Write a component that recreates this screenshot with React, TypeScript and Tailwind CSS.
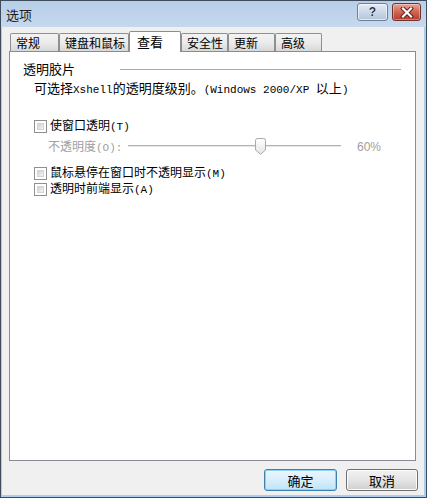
import React from "react";

const CJK = { fontFamily: '"Noto Sans CJK SC", "Noto Sans", sans-serif' };
const MONO = { fontFamily: '"Liberation Mono", "Noto Sans CJK SC", monospace' };

function Mixed({ text }: { text: string }) {
  const parts = text.split(/([\x20-\x7e]+)/).filter((p) => p.length > 0);
  return (
    <>
      {parts.map((p, i) =>
        /^[\x20-\x7e]+$/.test(p) ? (
          <span key={i} style={MONO} className="text-[11px] whitespace-pre">
            {p}
          </span>
        ) : (
          <span key={i}>{p}</span>
        )
      )}
    </>
  );
}

function CheckBox() {
  return (
    <div className="w-[13px] h-[13px] border border-[#8e8f8f] bg-white p-[2px] shrink-0">
      <div className="w-full h-full bg-gradient-to-br from-[#cdd1d6] to-[#f4f4f4] border border-[#d2d4d8]" />
    </div>
  );
}

function Tab({ label, w, selected }: { label: string; w: number; selected?: boolean }) {
  if (selected) {
    return (
      <div
        style={{ width: w }}
        className="h-[21px] -mb-px relative z-10 bg-white border-t border-l border-r border-[#898c95] rounded-t-[2px] pl-[7px] text-[13px] leading-[16px] pt-[2px] text-black whitespace-nowrap"
      >
        {label}
      </div>
    );
  }
  return (
    <div
      style={{ width: w }}
      className="h-[18px] bg-gradient-to-b from-[#f3f3f3] via-[#ebebeb] to-[#d8d8d8] border-t border-l border-r border-[#8e8f8f] rounded-t-[2px] pl-[5px] text-[12px] leading-[16px] pt-[1px] text-black whitespace-nowrap overflow-hidden"
    >
      {label}
    </div>
  );
}

function Row({ text, className }: { text: string; className?: string }) {
  return (
    <div className={"ml-[11px] flex items-center h-[16px] gap-[3px] " + (className ?? "")}>
      <CheckBox />
      <div className="text-[12px] leading-[14px] whitespace-nowrap">
        <Mixed text={text} />
      </div>
    </div>
  );
}

export default function App() {
  return (
    <div
      style={CJK}
      className="w-[427px] h-[498px] flex flex-col bg-[#f0f0f0] border border-[#3e4c5c] text-black overflow-hidden"
    >
      {/* title bar */}
      <div className="h-[26px] flex items-start bg-gradient-to-b from-[#b7cfe9] to-[#c6d8ed] shrink-0">
        <div className="pl-[5px] pt-[6px] text-[13px] leading-[16px] text-[#1e1e1e]">选项</div>
        <div className="ml-auto flex gap-[4px] pt-[2px] pr-[5px]">
          <div className="w-[31px] h-[18px] rounded-[3px] border border-[#6c7f97] bg-gradient-to-b from-[#e3ebf5] via-[#cbd8e8] to-[#b2c4dc] flex items-center justify-center shadow-[inset_0_0_0_1px_rgba(255,255,255,0.6)]">
            <span
              className="text-[12px] font-bold leading-none text-[#28323f]"
              style={{ fontFamily: '"Liberation Sans", sans-serif', textShadow: "0 0 1px #fff, 0 0 1px #fff" }}
            >
              ?
            </span>
          </div>
          <div className="w-[29px] h-[18px] rounded-[3px] border border-[#6e332c] bg-gradient-to-b from-[#e7a596] via-[#cf6555] to-[#b9382b] flex items-center justify-center shadow-[inset_0_0_0_1px_rgba(255,255,255,0.35)]">
            <svg width="14" height="11" viewBox="0 0 14 11">
              <path d="M3 1.5 L11 9.5 M11 1.5 L3 9.5" stroke="#5a1a14" strokeWidth="4" strokeLinecap="square" />
              <path d="M3 1.5 L11 9.5 M11 1.5 L3 9.5" stroke="#ffffff" strokeWidth="2.2" strokeLinecap="square" />
            </svg>
          </div>
        </div>
      </div>

      {/* body */}
      <div className="flex-1 flex flex-col border-l border-r-2 border-b-2 border-[#a8cdf0] bg-[#f0f0f0]">
        {/* tabs */}
        <div className="mt-[4px] h-[20px] pl-[8px] flex items-end">
          <Tab label="常规" w={49} />
          <Tab label="键盘和鼠标" w={70} />
          <Tab label="查看" w={52} selected />
          <Tab label="安全性" w={47} />
          <Tab label="更新" w={47} />
          <Tab label="高级" w={47} />
        </div>

        {/* panel */}
        <div className="ml-[7px] mr-[8px] h-[410px] border border-[#898c95] bg-white pl-[13px] pt-[9px] pr-[14px]">
          <div className="flex items-center h-[16px]">
            <div className="w-[97px] text-[13px] leading-[16px]">透明胶片</div>
            <div className="flex-1 h-px bg-[#a9a9a9]" />
          </div>

          <div className="ml-[11px] mt-[3px] text-[13px] leading-[16px] whitespace-nowrap">
            <Mixed text="可选择Xshell的透明度级别。(Windows 2000/XP 以上)" />
          </div>

          <Row text="使窗口透明(T)" className="mt-[20px]" />

          <div className="ml-[25px] mt-[4px] flex items-center h-[18px]">
            <div className="w-[80px] text-[12px] leading-[16px] text-[#a0a0a0] whitespace-nowrap">
              <Mixed text="不透明度(O):" />
            </div>
            <div className="relative w-[213px] h-[18px]">
              <div className="absolute left-0 right-0 top-[7px] h-px bg-[#b4b4b4]" />
              <div className="absolute left-0 right-0 top-[8px] h-px bg-[#e6e6e6]" />
              <svg className="absolute left-[127px] top-0" width="11" height="17" viewBox="0 0 11 17">
                <defs>
                  <linearGradient id="th" x1="0" y1="0" x2="0" y2="1">
                    <stop offset="0" stopColor="#ffffff" />
                    <stop offset="1" stopColor="#e4e4e4" />
                  </linearGradient>
                </defs>
                <path
                  d="M0.5 2.5 Q0.5 0.5 2.5 0.5 H8.5 Q10.5 0.5 10.5 2.5 V12 L5.5 16.3 L0.5 12 Z"
                  fill="url(#th)"
                  stroke="#a8a8a8"
                />
              </svg>
            </div>
            <div
              className="ml-[16px] text-[12px] leading-[16px] text-[#a0a0a0]"
              style={{ fontFamily: '"Liberation Sans", sans-serif' }}
            >
              60%
            </div>
          </div>

          <Row text="鼠标悬停在窗口时不透明显示(M)" className="mt-[9px]" />
          <Row text="透明时前端显示(A)" />
        </div>

        {/* buttons */}
        <div className="mt-[8px] h-[22px] flex justify-end gap-[9px] pr-[6px]">
          <div className="w-[73px] h-[22px] rounded-[3px] border border-[#3c7fb1] bg-gradient-to-b from-[#eaf6fd] via-[#d9effc] to-[#bee4f8] shadow-[inset_0_0_0_1px_#8fd2f8] flex items-center justify-center text-[13px] leading-none">
            确定
          </div>
          <div className="w-[72px] h-[22px] rounded-[3px] border border-[#707070] bg-gradient-to-b from-[#f2f2f2] via-[#e5e5e5] to-[#cfcfcf] shadow-[inset_0_0_0_1px_#fcfcfc] flex items-center justify-center text-[13px] leading-none">
            取消
          </div>
        </div>
      </div>
    </div>
  );
}
